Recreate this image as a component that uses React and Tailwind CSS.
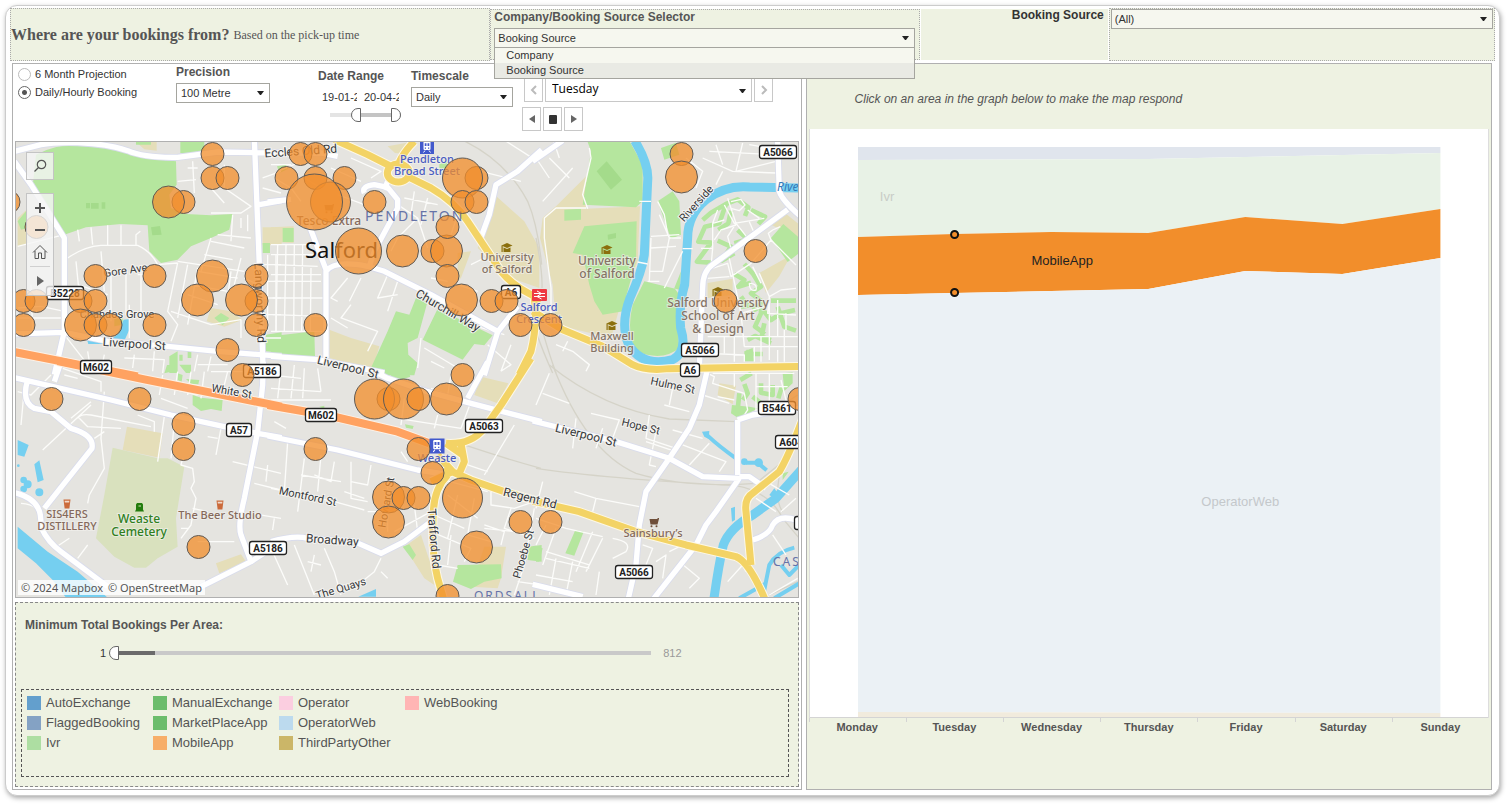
import React from "react";

const TILES = {
  A: "translate(10 138) scale(.3333)",
  B: "translate(270 138) scale(.3333)",
  C: "translate(535 138) scale(.3333)",
  D: "translate(10 365) scale(.3333)",
  E: "translate(270 365) scale(.3333)",
  F: "translate(535 365) scale(.3333)",
  G: "translate(680 180) scale(.3333)",
};

const BEIGE = {
  A: "M375 12H437V38L400 34ZM20 240L50 212V318L20 326ZM755 268H812V320H755ZM587 550L600 510L660 520L695 545L640 566Z",
  B: "M0 268L68 265V315L0 312ZM175 575L240 600L325 625L305 695L175 660ZM665 165L760 250L805 330V450L720 420L620 330L650 250ZM560 345L600 340L570 420L560 430ZM350 25L420 12L402 48L372 45Z",
  C: "M155 110L60 205L20 240L12 300L50 440L60 560L225 600L262 470L305 370L312 205L150 212ZM735 215L790 260V300L705 260ZM670 405L765 352L730 415L690 465ZM515 435L590 422V470L515 480Z",
  D: "M348 185L455 205L445 278L335 255ZM615 595L690 568L705 590L625 625Z",
  E: "M400 545L450 510L480 600L490 660L460 640ZM610 90L630 35L712 55L680 115ZM640 545L705 545L690 640L680 670L600 665Z",
  F: "M550 55L600 62L590 118L545 90Z",
};
const GREEN = {
  A: "M75 50Q130 20 210 18Q310 22 350 40Q400 62 495 70L497 140L475 170L480 210L525 228L600 232L665 228L655 275L600 300L540 325L500 365L450 375L415 340L410 262L330 258L225 268L160 290L120 230L65 145ZM508 12H580V45H508ZM20 250L45 220L50 270L30 275ZM755 315H777V345H755ZM610 540L630 525L655 540L635 562ZM765 590L812 583V645L765 640ZM475 655L500 640V705H475ZM505 650H515V668H505ZM530 635H541V660H530ZM505 680H540V705H525ZM310 535L335 540V560L310 565ZM375 12H420V20H375Z",
  B: "M35 270H68V312H35ZM0 595L130 580L132 655L0 650ZM435 480L470 490L440 600L410 615L412 650L440 675L430 712H290L350 580L375 520L415 530ZM455 605L500 512L665 592L640 622L610 618L575 665ZM505 78L530 70L528 95H505ZM18 85L45 80L52 92L25 105Z",
  C: "M155 12H282L320 80V190L300 208L140 200L165 40ZM145 265L302 250L300 370L272 470L262 520L200 530L175 490L160 440L140 350L110 345ZM85 215L135 212V245L85 248ZM325 430L430 455L420 520L430 630Q380 672 300 640Q270 580 290 500ZM365 190L410 160L430 190L435 290L405 302ZM705 300L742 258L790 300V345L755 372ZM375 30L420 14L430 50L385 65ZM435 400L415 450L430 470ZM625 640L650 630L655 670H625Z",
  D: "M545 90L570 98L635 105L632 138L600 132L570 138L545 120ZM468 0H490V18L460 25ZM500 25L515 30L512 50L500 45ZM525 42L565 45L562 58L540 56Z",
  E: "M320 0H405L418 35L380 48ZM402 178L428 183L425 192L405 188ZM395 545L415 538L435 570L425 585ZM560 600L690 598L692 640L640 650L600 672L546 650ZM770 545L812 540V590L770 585ZM145 125L160 122V132Z",
  F: "M0 545L20 550L10 590H0ZM118 495L143 500L115 572L88 565ZM740 25L770 22V55L745 78ZM588 120L640 125L665 130L640 145L605 158L585 145ZM740 325L758 320L740 345Z",
};
const DARK_GREEN = {
  A: "M225 195H237V211H225ZM240 195H263V212H240ZM272 193H283V212H272ZM420 268L447 264L452 290L424 292Z",
  C: "M182 100L212 70L258 125L225 155ZM215 290L240 285V300L216 305Z",
};
const ESTATE = {
  G: "M65 120L90 98L135 72L115 130L72 140L52 185L90 188L48 245L90 248M135 72L170 58L202 82L192 108M150 92L142 130L112 150M170 150L200 178L160 190M110 182L150 200L122 242L160 220M210 90L252 110L232 132M160 282L190 300L172 320L210 308M190 252L215 280L240 320L210 340L240 362V400L222 440L252 462M230 370L270 420L300 400L342 390M290 380L310 440L345 452M270 362H345M200 480L222 468L270 490M195 515L215 522H245M200 540L208 525M180 380L215 375L225 395M250 430L242 470L270 480M180 350L200 380M178 600L212 580M190 612L200 640L186 660M240 610V638L275 645V615M302 622L292 655M175 640L170 690L210 690M215 650L240 670",
};
const WATER_FILL = {
  A: "M228 605L290 612L318 590L338 545L357 543L355 575L340 608L300 606L280 618L232 618Z",
  D: "M20 485L110 560L200 620L290 698H165L125 645L75 595L20 550ZM20 225L53 240L40 275L20 270ZM70 298L85 286L98 345L80 352ZM73 382a12 12 0 1 0 24 0a12 12 0 1 0-24 0M28 345a10 10 0 1 0 20 0a10 10 0 1 0-20 0M38 358a12 12 0 1 0 24 0a12 12 0 1 0-24 0M28 372a10 10 0 1 0 20 0a10 10 0 1 0-20 0M18 302a4 4 0 1 0 8 0a4 4 0 1 0-8 0",
  E: "M262 695L315 672V695Z",
  F: "M498 200L520 198L518 222L505 215ZM615 290a10 10 0 1 0 20 0a10 10 0 1 0-20 0M655 293a13 13 0 1 0 26 0a13 13 0 1 0-26 0M700 390L715 370L725 385L715 400ZM585 430L597 425V465L588 470Z",
};
const RIVER = {
  C: "M296 8Q340 80 335 130L325 350Q318 400 282 480Q252 560 278 620Q320 690 410 665Q456 640 434 570Q428 500 446 440L455 300Q455 230 510 185Q570 140 640 147L800 150",
  F: "M534 700Q548 600 562 540Q580 490 650 450L720 400L800 310",
};
const STREAM = {
  F: "M515 212Q550 245 600 280M630 293H665L692 316M682 690L700 600Q722 560 775 548M610 700L690 655M715 700L790 655M735 600L760 630L790 600",
};
const RAIL = {
  B: "M560 0Q700 60 770 190Q800 260 812 380",
  C: "M0 300Q20 400 18 450M0 580Q20 640 50 705M20 580Q40 650 60 705",
  E: "M580 240Q700 280 810 310",
  F: "M40 0Q200 130 400 162L600 170Q700 150 785 90M50 0Q150 260 300 325Q450 370 660 355L740 290M0 310Q200 340 600 362Q700 380 740 460L790 520M740 290Q710 400 740 440M700 690L785 650",
};
const MINOR = {
  A: "M500 130L555 125M545 70L550 165M640 80V150L720 205L690 225H600M600 150L640 195M530 90H560M755 120L810 100M755 150L810 165M20 325L160 290M170 360Q220 325 270 322H380Q420 340 440 380L500 375M200 275L205 310M240 268L245 320M290 262V320M330 262V322M375 322V290L388 280M195 370L205 470M270 340L280 460M300 400V550M345 400V530M390 390V545M200 440L290 470M380 410H400M500 375L470 520L500 560L480 610M530 380L500 540M560 390L530 560M600 300L570 400M580 350L665 365M560 400L680 420M540 440L650 460M500 370L700 400M600 310L700 330M620 290L720 300M480 520L600 560L690 545L690 600M660 400L650 480M690 360L670 440M530 470L620 500M700 420L740 440M355 500V600M160 590L230 680M20 510L90 505L160 520M60 440L65 580M20 540H150M230 640L240 700M280 650L270 700M340 660L460 665L455 705M370 650L365 690M430 640L425 700M560 650L550 700M600 655L590 700M560 680H650M740 600H810M770 350V580M795 350V580M750 380H810M750 430H810M750 480H810M750 530H810M665 230L660 310M690 240V270M710 230V280",
  B: "M0 320H120M0 350H130M10 380L140 385M10 430H150M5 480H160M5 530L160 535M20 320L15 580M45 320L40 580M70 320L68 580M95 320L92 580M120 390L118 580M0 580H160M10 120L60 150L90 190M20 100L80 75M0 80H60M100 120L150 150M240 60L330 100L300 120M180 90L270 130M200 170L280 200M380 200L440 240L470 330M400 180L500 200M430 160L420 230M440 240L380 300L360 340M470 180L450 260M530 430L480 420M560 440L620 460M600 380L640 360M350 410L320 480L380 470M380 430L350 520M230 420L180 480L200 490M270 420L235 490M240 500L210 540L320 580L290 640M180 540L230 570M600 560L700 590M560 230L540 290M180 680L330 700M650 620L720 680L690 700M720 620L690 700M450 600L440 690M460 630L560 690M630 100L750 130M690 0L800 70M480 670L520 690M0 410H150",
  C: "M50 0L70 60M0 60L40 120M20 190L110 90M40 60L100 120M150 210H60L25 240V300L45 450V550M160 30L165 60L140 170L155 212M310 190H345M305 372L335 378M345 295L430 290M345 330L420 325M370 230L400 300L380 400H340M365 190L385 230L395 290M345 300L340 430M400 300L435 300M335 430H370M440 340L385 450M440 332H470M450 60L500 100L480 150M500 60L590 100L720 105M540 20L560 80M620 15L600 100L720 70M520 40L720 50M560 100L540 140M640 20L700 30M60 620L110 640L160 680L150 700M95 610L80 640",
  G: "M60 205H95L90 260M95 205V130L130 120M95 130L110 90M130 75L160 130L250 115M140 55L165 130L140 170L150 205L130 235M165 130L205 180M165 135L120 150L100 180M150 65L180 58L192 75L175 92L150 85M200 90L235 115M205 125L220 160M80 270L140 250L150 290L210 250L270 180L262 160L275 150L298 140M270 180L345 255M145 235L180 400L190 500M80 295L145 290M235 280L265 350L260 400L345 405M265 350L300 330L345 325M215 260L240 310M205 310Q230 310 225 330Q205 335 205 310M265 350V540M290 360V470M315 400V450M80 470H350M190 500H350M80 520L190 525V545M160 470V545M220 500V545M310 450V545M240 470V545M290 510V545M130 470V520M180 400L250 380M80 580L100 590L95 610L190 640M95 580H340M160 580V620M225 580V700M265 580V700M300 600L320 680M225 620H320M190 640L200 690L180 720M110 650L160 660",
  D: "M20 80L60 90L120 30M40 70L30 180M155 10L270 50V80M160 30L200 40M240 120L95 255M180 160L240 110M280 80L270 220L280 310L235 390L230 415M200 160Q210 145 240 150L420 185M205 160L230 185L330 190M250 220L280 200M380 150L430 170V200M455 30L445 90M460 155L440 290M490 170L480 280M515 280L510 300L545 310L550 350L540 370L555 400L540 480L510 520M545 430L590 440M560 530H670M510 490H535M500 20L490 90M540 20L530 90M580 20L570 100M440 60L560 90M450 100L530 130M630 190L615 270M590 215L620 220M665 290L810 325M770 300L765 350M730 355L810 375M790 460L785 495M720 445L810 460M600 20H700M650 20L640 60M230 540L200 580M30 415Q90 420 85 460M130 550L175 520",
  E: "M0 30L90 40M30 10L20 100M70 0L60 100M0 70L150 80M100 10L95 100M140 10L150 80M0 105H180M10 170L45 190M50 230L40 380M0 370L40 378L190 410L280 435M100 280L80 440M150 270L140 380M190 290L180 350L130 330M240 290V400L290 410M220 380L280 400M300 300L290 360L240 350M90 330L210 350M350 340V500M390 260L410 290M370 500L480 440M290 440H340M430 420L440 500M500 340L650 380M530 390L620 460M560 390L530 520M610 400L590 510L660 530M490 450L580 490M480 500L600 550L580 590M640 480L700 500L690 540M540 510L530 600M500 600L560 610M660 380V420L730 430L790 410M720 430L700 490L790 520M790 430L760 600L730 690M0 550L50 660M70 540L130 690M160 550L190 620L210 690M110 590L150 600M130 570L120 620M330 580L310 620L260 660M330 620L350 640M730 180L640 330M480 70L560 100M500 150L490 190M380 160L570 190L600 110M540 30L530 90M400 100L390 180M590 300L650 320M640 490L730 500M740 650L810 660",
  F: "M40 25L0 120M20 85L100 115M165 145L250 165L230 220M120 160L110 250M180 250L200 190M410 70L400 120M385 120L460 140M500 90L580 115M340 150L330 220L420 250M330 230L420 260M360 200L340 300L360 305M410 195L500 220M440 240L570 290L550 320M460 300L520 235M20 350L0 430M115 380L180 400L310 425M180 400L170 440M0 460L60 480L90 490M30 480L0 540M60 490L20 600M90 490L200 515M170 500L120 620M200 520L150 620M230 520Q290 530 270 560L230 580M30 560L160 600M30 580L160 610M60 580L40 690M110 590L90 690M190 620L180 690M0 630L110 650M320 540L350 550L330 600M360 590L390 570L380 640M400 560L440 540M430 590L490 640L460 670M460 570L430 600M575 650L620 600L630 620M650 530L700 490M710 510L750 570M700 690L785 640M735 440L780 400M690 350L760 390M660 400L720 440",
};
const MAIN = {
  A: "M10 40L90 20Q130 12 200 14Q290 18 350 38Q400 60 500 58Q560 50 620 42L812 45M730 0L745 380L757 710M10 70L60 140L160 300V580L130 710M10 588L160 583L290 610L470 625L620 640L812 655M745 200L812 188",
  B: "M0 45H150L200 55M-10 192L60 184M110 250L165 395V660M165 400Q190 365 290 385L340 400L480 470L680 580M280 165Q270 145 310 140L350 148L380 185V210L310 340L295 385M340 155L350 130M812 35L740 100L675 140L655 230L625 312M740 505L680 582L640 712M0 655L140 665L340 705",
  C: "M725 8L730 160Q740 190 800 240M755 215L530 380Q500 400 500 450L490 690M-10 70L80 8",
  D: "M10 38L300 105L480 150L640 185L740 205L812 218M50 45Q30 110 70 130L120 140L180 190Q250 210 243 250L100 430M10 383Q80 400 88 450L92 490Q110 530 150 560L290 665M560 670L720 590L812 530M130 50L150 -10M757 -10L755 60L740 200L700 400Q680 480 690 510L720 590",
  E: "M-10 213L200 255L440 315L540 330M310 20L350 40L470 80L600 115L812 170M0 530Q70 510 110 520L250 530L330 565L400 530L480 470M650 -10L590 100",
  F: "M-10 168L240 230L400 280L500 335L610 340M515 10L490 120L460 190L400 280L330 380L310 480L300 600L275 710M605 165L650 150L790 130M605 165V330M610 340L540 440L510 480L480 540L350 705M610 335H640L690 370M650 525Q700 510 710 480Q730 445 790 468M-10 658L140 695",
};
const YELLOW = {
  B: "M190 5L290 50L360 85M385 72Q400 40 430 10M415 118L480 150Q550 190 590 250L690 400Q730 450 812 485M790 480Q800 560 780 640L745 710M349 105a33 27 0 1 0 66 0a33 27 0 1 0-66 0",
  C: "M-10 520L80 575L200 625L290 680Q330 700 400 692L800 685",
  E: "M780 -20L690 120L640 190Q600 240 525 235M570 235L580 290L565 325M500 270L545 320L480 350M520 310L600 345L700 380L812 412M530 330Q490 370 487 440Q480 560 500 640L520 710M525 235L575 270",
  F: "M-10 408L130 440L300 500L450 540L600 575Q640 590 690 710M800 160Q760 270 730 320L650 385Q625 400 630 440L645 600",
};
const MOTORWAY = {
  A: "M0 640L380 715",
  D: "M140 -12L400 43L600 83L812 125",
  E: "M-10 120L180 153L380 200L475 235",
};

const BUBBLES = [
  [212, 154], [212, 178], [227, 178], [183, 202], [168, 202, 16], [8, 202], [36, 227],
  [95, 276], [154, 276], [212, 276, 16], [197, 300, 16], [256, 276], [256, 301], [241, 300, 16], [256, 325],
  [23, 301], [36, 301], [80, 301], [95, 301], [23, 325], [80, 325, 16], [95, 325], [110, 325],
  [154, 325], [227, 350], [242, 375], [300, 154], [315, 154], [286, 178], [315, 178],
  [344, 178], [330, 202, 20], [314, 202, 28], [374, 202], [358, 251, 23], [402, 251, 16], [432, 251],
  [446, 251, 16], [476, 178], [462, 178, 20], [462, 202], [476, 202], [447, 227], [447, 276],
  [461, 300, 16], [491, 301], [506, 301], [520, 325], [315, 325], [462, 375], [681, 154],
  [681, 177, 16], [755, 251], [725, 301], [550, 325], [51, 399], [139, 399], [183, 424],
  [183, 449], [198, 547], [388, 399], [374, 399, 20], [403, 399, 20], [418, 399], [446, 399, 16],
  [315, 449], [418, 449], [432, 473], [388, 497, 16], [403, 498], [418, 498], [388, 522, 16],
  [462, 498, 20], [476, 547, 16], [520, 522], [447, 596], [550, 522], [799, 399],
];

const SHIELDS = [
  ["B5228", 64, 293, 37], ["M602", 95, 367, 31], ["A5186", 261, 371, 37], ["M602", 320, 415, 31],
  ["A57", 238, 430, 25], ["A5186", 267, 548, 37], ["A6", 510, 292, 19], ["A5063", 483, 426, 37],
  ["A5066", 777, 152, 37], ["A5066", 699, 350, 37], ["A6", 689, 370, 19], ["B5461", 776, 408, 37],
  ["A6042", 793, 442, 37], ["A5066", 633, 572, 37], ["", 800, 523, 13],
];

const ROAD_LABELS = [
  ["Eccles Old Rd", 300, 155, -4, 12], ["Gore Ave", 125, 274, -8, 11], ["Chandos Grove", 116, 318, 0, 11],
  ["Liverpool St", 133, 348, 4, 12], ["White St", 230, 395, 10, 11], ["Langworthy Rd", 255, 303, 88, 12],
  ["Liverpool St", 346, 371, 14, 12], ["Churchill Way", 445, 314, 30, 12], ["Riverside", 698, 206, -48, 11],
  ["Hulme St", 671, 389, 12, 11], ["Hope St", 639, 430, 14, 11], ["Liverpool St", 584, 439, 14, 12],
  ["Montford St", 306, 500, 12, 11], ["Howard St", 389, 503, -80, 11], ["Broadway", 331, 544, 4, 12],
  ["The Quays", 341, 592, -17, 11], ["Trafford Rd", 429, 539, 85, 12], ["Phoebe St", 526, 555, -74, 11],
  ["Regent Rd", 528, 502, 14, 12],
];

function Layer({ data, ...rest }) {
  return Object.entries(data).map(([tile, d]) => (
    <g key={tile} transform={TILES[tile]}>
      <path d={d} {...rest} />
    </g>
  ));
}

function Roads({ data, color, width, casing, casingWidth }) {
  return (
    <g fill="none" strokeLinejoin="round">
      {casing && <Layer data={data} stroke={casing} strokeWidth={casingWidth} />}
      <Layer data={data} stroke={color} strokeWidth={width} />
    </g>
  );
}

function Poi({ lines, x, y, color, size = 11, gap = 12 }) {
  return (
    <text textAnchor="middle" fill={color} stroke="#f1f0ed" strokeWidth="2" strokeOpacity=".7" paintOrder="stroke" fontSize={size} fontFamily="'Noto Sans', 'Open Sans', sans-serif" fontWeight="500">
      {lines.map((l, i) => (
        <tspan key={l} x={x} y={y + i * gap}>{l}</tspan>
      ))}
    </text>
  );
}

function Cap({ x, y }) {
  return (
    <g transform={`translate(${x} ${y})`} fill="#8b6f0d">
      <path d="M-5.500 -2.500L0 -5L5.500 -2.500L0 0Z" />
      <path d="M-3.500 -.6L0 1L3.500 -.6V4H-3.500Z" />
      <path d="M-5.500 -2.500h1.200V4h-1.200Z" />
    </g>
  );
}

function Station({ x, y, s = 14 }) {
  return (
    <g transform={`translate(${x} ${y}) scale(${s / 14})`}>
      <rect x="-7" y="-7" width="14" height="14" fill="#4259cc" />
      <rect x="-3.500" y="-5.500" width="7" height="8.500" rx="1" fill="#fff" />
      <path d="M-2.300 -3.800H-.5V-1H-2.300ZM.5 -3.800H2.300V-1H.5ZM-2.200 .6h1.200v1.200h-1.200ZM1 .6h1.200v1.200H1Z" fill="#4259cc" />
      <path d="M-2 3.500L-3.500 5.500M2 3.500L3.500 5.500" stroke="#fff" />
    </g>
  );
}

function Glass({ x, y }) {
  return (
    <g transform={`translate(${x} ${y})`}>
      <path d="M-3.500 -4.500H3.500L2.400 4.500H-2.400Z" fill="#cb6a3a" />
      <path d="M-2.400 -3.300H2.400L2.200 -1.500H-2.200Z" fill="#f2d9c9" />
    </g>
  );
}

function Cart({ x, y }) {
  return (
    <g transform={`translate(${x} ${y})`} fill="#6f4f3a">
      <path d="M-4.500 -4H3L4 -5H5V-4.300L3.500 1.500H-3.500Z" />
      <circle cx="-2.500" cy="3.200" r="1" />
      <circle cx="2.500" cy="3.200" r="1" />
    </g>
  );
}

function MapDrawing() {
  return (
    <svg viewBox="15 142 782 455" preserveAspectRatio="xMinYMin slice" className="block h-[455px] w-full" role="img" aria-label="Map of bookings by area">
      <rect x="-400" y="-400" width="1800" height="1600" fill="#e5e4e0" />
      <Layer data={BEIGE} fill="#e5deb9" />
      <g transform={TILES.D}>
        <path d="M305 248L440 280L470 280L520 305L495 460L500 545L440 580L405 608H370L310 575L255 520L280 390Z" fill="#d9e1be" />
      </g>
      <Layer data={GREEN} fill="#b5e69e" />
      <Layer data={DARK_GREEN} fill="#a4db8b" />
      <Roads data={ESTATE} color="#b5e69e" width="14" />
      <Layer data={WATER_FILL} fill="#75cff0" />
      <Roads data={RAIL} color="#d5d3c8" width="4" />
      <Roads data={STREAM} color="#75cff0" width="12" />
      <Roads data={RIVER} color="#75cff0" width="27" />
      <Roads data={MINOR} color="#fcfcfa" width="4" />
      <Roads data={MAIN} color="#ffffff" width="16" casing="#d9dcec" casingWidth="21" />
      <Roads data={MOTORWAY} color="#ffa261" width="24" casing="#fdf1e6" casingWidth="30" />
      <Roads data={YELLOW} color="#f3d365" width="21" casing="#fdf8e6" casingWidth="27" />

      <g fill="#36383b" stroke="#f4f3f0" strokeWidth="2" paintOrder="stroke" textAnchor="middle" fontFamily="Roboto, 'Liberation Sans', sans-serif">
        {ROAD_LABELS.map(([t, x, y, a, size]) => (
          <text key={t + x} fontSize={size} transform={`translate(${x} ${y}) rotate(${a})`}>{t}</text>
        ))}
      </g>

      <g textAnchor="middle" fontFamily="Roboto, 'Liberation Sans', sans-serif">
        {SHIELDS.map(([t, x, y, w]) => (
          <g key={t + x}>
            <rect x={x - w / 2} y={y - 6.5} width={w} height="13" rx="2.500" fill="#fff" stroke="#222" strokeWidth="1.300" />
            <text x={x} y={y + 4} fontSize="10" fontWeight="700" fill="#222">{t}</text>
          </g>
        ))}
      </g>

      <g fill="#6673a8" fontFamily="'Noto Sans', sans-serif" letterSpacing="2">
        <text x="364" y="221" fontSize="14">PENDLETON</text>
        <text x="473" y="600" fontSize="12">ORDSALL</text>
        <text x="772" y="566" fontSize="12">CASTLEFIELD</text>
      </g>
      <text x="304" y="258" fontSize="22" fill="#111" fontFamily="'Noto Sans', sans-serif">Salford</text>
      <text x="776" y="191" fontSize="12" fontStyle="italic" fill="#3579b8" fontFamily="'Noto Sans', sans-serif">River Irwell</text>

      <Poi lines={["Pendleton", "Broad Street"]} x={426} y={163} color="#4b5cc0" />
      <Poi lines={["Tesco Extra"]} x={328} y={225} color="#85695b" size={12} />
      <Poi lines={["University", "of Salford"]} x={506} y={261} color="#857365" />
      <Poi lines={["University", "of Salford"]} x={606} y={265} color="#857365" size={12} gap={13} />
      <Poi lines={["Salford University", "School of Art", "& Design"]} x={717} y={307} color="#857365" size={12} gap={13} />
      <Poi lines={["Maxwell", "Building"]} x={611} y={340} color="#857365" />
      <Poi lines={["Salford", "Crescent"]} x={538} y={311} color="#4b5cc0" />
      <Poi lines={["Weaste"]} x={436} y={462} color="#4b5cc0" />
      <Poi lines={["SIS4ERS", "DISTILLERY"]} x={66} y={518} color="#85695b" />
      <Poi lines={["The Beer Studio"]} x={219} y={519} color="#85695b" />
      <Poi lines={["Weaste", "Cemetery"]} x={138} y={523} color="#2f7f1d" size={12} gap={13} />
      <Poi lines={["Sainsbury’s"]} x={652} y={537} color="#85695b" />

      <Cap x={506} y={248} />
      <Cap x={606} y={250} />
      <Cap x={717} y={292} />
      <Cap x={611} y={326} />
      <Station x={426} y={147} />
      <Station x={436} y={446} s={15} />
      <g transform="translate(538 295)">
        <rect x="-7" y="-6" width="15" height="12" rx="1" fill="#ee3a43" />
        <path d="M-5 -1.500H6M-5 1.500H6M-2 -4L2.500 -1.500L-2 1.500L2.500 4" fill="none" stroke="#fff" />
      </g>
      <Glass x={66} y={504} />
      <Glass x={219} y={505} />
      <Cart x={653} y={523} />
      <Cart x={328} y={209} />
      <path d="M136 503h5l1 1.500v5l1 2h-9l1-2v-5Z" fill="#237c0d" />
      <path d="M137.500 506h2.500" stroke="#d9e1be" />

      <g fill="#f28e2b" fillOpacity=".76" stroke="#5f5a55" strokeWidth="1">
        {BUBBLES.map(([x, y, r], i) => (
          <circle key={i} cx={x - 0.5} cy={y} r={r || 11.5} />
        ))}
      </g>
    </svg>
  );
}

const FIELD = "block appearance-none rounded-none border border-[#a5a59f] text-[11px] leading-[14px] text-[#333] outline-none";

function Arrow({ className }) {
  return (
    <svg viewBox="0 0 7 4" className={`pointer-events-none absolute h-[4px] w-[7px] ${className}`} fill="#222" aria-hidden="true">
      <path d="M0 0H7L4 4H3Z" />
    </svg>
  );
}

function SmallSelect({ id, label, value, width }) {
  return (
    <div>
      <label htmlFor={id} className="block text-[12px] leading-[14px] font-bold text-[#555]">{label}</label>
      <div className={`relative mt-1 ${width}`}>
        <select id={id} className={`${FIELD} h-[20px] w-full bg-white pl-[4px]`}>
          <option>{value}</option>
        </select>
        <Arrow className="top-[8px] right-[6px]" />
      </div>
    </div>
  );
}

function RadioRow({ text, checked }) {
  return (
    <label className="flex h-[18px] items-center gap-[4px] text-[11px] text-[#333]">
      <input
        type="radio"
        name="mode"
        defaultChecked={checked}
        className="h-[13px] w-[13px] appearance-none rounded-full border border-[#bbb] bg-white checked:border-[#666] checked:bg-[radial-gradient(circle,#555_0_2px,transparent_3px)]"
      />
      {text}
    </label>
  );
}

const NAV = "flex h-[24px] w-[19px] items-center justify-center border border-[#c8c8c8] bg-white";

function Toolbar() {
  return (
    <div className="flex h-[77px]">
      <div className="w-[161px] shrink-0 pt-[1px] pl-[3px]">
        <RadioRow text="6 Month Projection" />
        <RadioRow text="Daily/Hourly Booking" checked />
      </div>
      <div className="w-[142px] shrink-0 pt-[1px]">
        <SmallSelect id="precision" label="Precision" value="100 Metre" width="w-[94px]" />
      </div>
      <div className="w-[93px] shrink-0 pt-[5px]">
        <div className="text-[12px] leading-[14px] font-bold text-[#555]">Date Range</div>
        <div className="mt-[7px] flex gap-[7px] pl-[4px]">
          <input aria-label="Start date" defaultValue="19-01-2024" className="block h-[14px] w-[35px] bg-transparent p-0 text-[11px] text-[#333]" />
          <input aria-label="End date" defaultValue="20-04-2024" className="block h-[14px] w-[35px] bg-transparent p-0 text-[11px] text-[#333]" />
        </div>
        <div className="relative mt-[4px] ml-[12px] h-[14px] w-[71px] bg-[linear-gradient(to_right,#e4e4e4_0_26px,#c4c4c4_26px)] bg-[length:100%_4px] bg-center bg-no-repeat">
          <input
            type="range"
            aria-label="Range start"
            defaultValue="34"
            className="pointer-events-none absolute inset-0 h-[14px] w-full appearance-none bg-transparent [&::-webkit-slider-thumb]:pointer-events-auto [&::-webkit-slider-thumb]:h-[14px] [&::-webkit-slider-thumb]:w-[10px] [&::-webkit-slider-thumb]:appearance-none [&::-webkit-slider-thumb]:rounded-l-full [&::-webkit-slider-thumb]:border [&::-webkit-slider-thumb]:border-[#666] [&::-webkit-slider-thumb]:bg-white"
          />
          <input
            type="range"
            aria-label="Range end"
            defaultValue="100"
            className="pointer-events-none absolute inset-0 h-[14px] w-full appearance-none bg-transparent [&::-webkit-slider-thumb]:pointer-events-auto [&::-webkit-slider-thumb]:h-[14px] [&::-webkit-slider-thumb]:w-[10px] [&::-webkit-slider-thumb]:appearance-none [&::-webkit-slider-thumb]:rounded-r-full [&::-webkit-slider-thumb]:border [&::-webkit-slider-thumb]:border-[#666] [&::-webkit-slider-thumb]:bg-white"
          />
        </div>
      </div>
      <div className="w-[111px] shrink-0 pt-[5px]">
        <SmallSelect id="timescale" label="Timescale" value="Daily" width="w-[102px]" />
      </div>
      <div className="pt-[14px]">
        <div className="flex gap-[2px] pl-[2px]">
          <button aria-label="Previous day" className={NAV}>
            <svg viewBox="0 0 8 10" className="h-[10px] w-[8px]" fill="none" stroke="#bbb" strokeWidth="2"><path d="M6 1L2 5L6 9" /></svg>
          </button>
          <div className="relative w-[207px]">
            <select aria-label="Day" className="block h-[24px] w-full appearance-none border border-[#c8c8c8] bg-white pb-[2px] pl-[6px] font-['Open_Sans',sans-serif] text-[12px] text-black">
              <option>Tuesday</option>
            </select>
            <Arrow className="top-[11px] right-[6px]" />
          </div>
          <button aria-label="Next day" className={NAV}>
            <svg viewBox="0 0 8 10" className="h-[10px] w-[8px]" fill="none" stroke="#bbb" strokeWidth="2"><path d="M2 1L6 5L2 9" /></svg>
          </button>
        </div>
        <div className="mt-[5px] flex gap-[2px]">
          <button aria-label="Play backwards" className={NAV}>
            <svg viewBox="0 0 6 8" className="h-[8px] w-[6px]" fill="#666"><path d="M6 0V8L0 4Z" /></svg>
          </button>
          <button aria-label="Stop" className={NAV}>
            <span className="h-[9px] w-[8px] rounded-[1px] bg-[#333]" />
          </button>
          <button aria-label="Play forwards" className={NAV}>
            <svg viewBox="0 0 6 8" className="h-[8px] w-[6px]" fill="#666"><path d="M0 0V8L6 4Z" /></svg>
          </button>
        </div>
      </div>
    </div>
  );
}

const CONTROL = "flex w-full items-center justify-center";

function MapPanel() {
  return (
    <div className="relative overflow-hidden border border-[#b0b0b0]">
      <MapDrawing />
      <div className="absolute top-[10px] left-[10px] h-[28px] w-[28px] border border-[#c4c4c4] bg-[#f5f5f5]/80">
        <button aria-label="Search" className={`${CONTROL} h-full`}>
          <svg viewBox="0 0 14 14" className="h-[14px] w-[14px]" fill="none" stroke="#555" strokeWidth="1.200"><circle cx="8.500" cy="5.500" r="4.200" /><path d="M5.500 8.500L1.500 12.500" /></svg>
        </button>
      </div>
      <div className="absolute top-[51px] left-[10px] flex h-[103px] w-[28px] flex-col border border-[#c4c4c4] bg-[#f5f5f5]/80">
        <button aria-label="Zoom in" className={`${CONTROL} h-[28px]`}>
          <svg viewBox="0 0 10 10" className="h-[10px] w-[10px]" stroke="#555" strokeWidth="2"><path d="M5 0V10M0 5H10" /></svg>
        </button>
        <button aria-label="Zoom out" className={`${CONTROL} h-[16px]`}>
          <svg viewBox="0 0 10 10" className="h-[10px] w-[10px]" stroke="#555" strokeWidth="2"><path d="M0 5H10" /></svg>
        </button>
        <button aria-label="Reset view" className={`${CONTROL} h-[28px]`}>
          <svg viewBox="0 0 16 16" className="h-[16px] w-[16px]" fill="none" stroke="#555"><path d="M1 8.500L8 1.500L15 8.500M3 7V14.500H6.500V9H9.500V14.500H13V7" /></svg>
        </button>
        <span className="mx-[3px] border-t border-[#d0d0d0]" />
        <button aria-label="Map tools" className={`${CONTROL} grow`}>
          <svg viewBox="0 0 7 10" className="h-[10px] w-[7px]" fill="#666"><path d="M0 0L7 5L0 10Z" /></svg>
        </button>
      </div>
      <div className="absolute bottom-[2px] left-[2px] flex gap-[5px] bg-white/80 px-[3px] font-['Noto_Sans',sans-serif] text-[11px] leading-[15px] text-[#555]">
        <span>© 2024 Mapbox</span>
        <span>© OpenStreetMap</span>
      </div>
    </div>
  );
}

const LEGEND = [
  ["AutoExchange", "bg-[#639fcd]"],
  ["FlaggedBooking", "bg-[#84a2c4]"],
  ["Ivr", "bg-[#addea2]"],
  ["ManualExchange", "bg-[#6cbd6c]"],
  ["MarketPlaceApp", "bg-[#6cbd6c]"],
  ["MobileApp", "bg-[#f7ae68]"],
  ["Operator", "bg-[#fbcee0]"],
  ["OperatorWeb", "bg-[#bcdaee]"],
  ["ThirdPartyOther", "bg-[#cbb668]"],
  ["WebBooking", "bg-[#ffb5b4]"],
];

function FilterPanel() {
  return (
    <div className="mt-[4px] h-[185px] border border-dashed border-[#888] bg-[#eef2e2] pt-[14px] pr-[9px] pl-[5px]">
      <label htmlFor="min-total" className="block pl-[4px] text-[12px] leading-[16px] font-bold text-[#555]">
        Minimum Total Bookings Per Area:
      </label>
      <div className="mt-[13px] flex h-[14px] items-center pr-[107px] pl-[79px]">
        <span className="w-[9px] text-[11px] leading-[14px] text-[#333]">1</span>
        <input
          id="min-total"
          type="range"
          min="1"
          max="812"
          defaultValue="1"
          className="h-[14px] min-w-0 grow appearance-none bg-[linear-gradient(to_right,transparent_0_8px,#6b6b6b_8px_46px,#c9c9c9_46px)] bg-[length:100%_4px] bg-center bg-no-repeat [&::-webkit-slider-thumb]:h-[14px] [&::-webkit-slider-thumb]:w-[10px] [&::-webkit-slider-thumb]:appearance-none [&::-webkit-slider-thumb]:rounded-l-full [&::-webkit-slider-thumb]:border [&::-webkit-slider-thumb]:border-[#666] [&::-webkit-slider-thumb]:bg-white"
        />
        <span className="ml-[12px] text-[11px] leading-[14px] text-[#999]">812</span>
      </div>
      <ul className="mt-[29px] grid h-[88px] grid-flow-col grid-cols-[repeat(4,126px)] grid-rows-[repeat(3,20px)] border border-dashed border-[#555] pt-[3px] pl-[5px]">
        {LEGEND.map(([name, color]) => (
          <li key={name} className="flex items-center gap-[5px] text-[13px] leading-[20px] text-[#555]">
            <span className={`h-[14px] w-[14px] shrink-0 ${color}`} />
            {name}
          </li>
        ))}
      </ul>
    </div>
  );
}

const DAYS = ["Monday", "Tuesday", "Wednesday", "Thursday", "Friday", "Saturday", "Sunday"];

function ChartPanel() {
  return (
    <section className="min-w-0 flex-[686] border border-[#b0b0b0] bg-[#eef2e2] px-[2px]">
      <p className="h-[65px] pt-[27px] pl-[46px] text-[12px] leading-[16px] text-[#555] italic">
        Click on an area in the graph below to make the map respond
      </p>
      <svg viewBox="810 129 678 589" preserveAspectRatio="none" className="block h-[589px] w-full border-x border-[#ddd] bg-white" role="img" aria-label="Share of bookings by source and day">
        <path d="M858 147H1440V153L1245 157L1148 159L858 160Z" fill="#e0e5ed" />
        <path d="M858 160L1148 159L1245 157L1440 153V209L1342 224L1245 217L1148 233L1051 232L954 234L858 237Z" fill="#e8f2e6" />
        <path d="M858 237L954 234L1051 232L1148 233L1245 217L1342 224L1440 209V258L1342 274L1245 271L1148 289L1051 291L954 293L858 295Z" fill="#f28e2b" />
        <path d="M858 295L954 293L1051 291L1148 289L1245 271L1342 274L1440 258V713L858 712Z" fill="#ebf1f5" />
        <path d="M858 712L1440 713V718H858Z" fill="#f1ebdd" />
        <path d="M809 717.500H1489" stroke="#d4d4d4" />
        <g fill="#f28e2b" stroke="#111" strokeWidth="2">
          <circle cx="954.500" cy="234.500" r="3.500" />
          <circle cx="954.500" cy="292.500" r="3.500" />
        </g>
        <g textAnchor="middle" fontSize="13" fontFamily="'Liberation Sans', Arial, sans-serif">
          <text x="887" y="201" fill="#c8cdc7">Ivr</text>
          <text x="1062" y="265" fill="#222">MobileApp</text>
          <text x="1240" y="506" fill="#c4c8cb">OperatorWeb</text>
        </g>
      </svg>
      <ul className="grid grid-cols-7 text-center text-[11px] leading-[19px] font-bold text-[#555]">
        {DAYS.map((d) => (
          <li key={d} className="bg-[linear-gradient(#d4d4d4,#d4d4d4)] bg-[length:1px_4px] bg-left-top bg-no-repeat">{d}</li>
        ))}
      </ul>
    </section>
  );
}

function Header() {
  return (
    <header className="grid h-[53px] grid-cols-[480fr_429fr_189fr_386fr]">
      <div className="flex items-center border border-dotted border-[#aaa] bg-[#eef2e2] font-['Liberation_Serif',serif] text-[#555]">
        <h1 className="text-[16px] font-bold whitespace-nowrap">Where are your bookings from?</h1>
        <span className="ml-[4px] text-[12px] whitespace-nowrap">Based on the pick-up time</span>
      </div>
      <div className="my-px border border-dotted border-[#aaa] bg-[#eef2e2] pr-[4px] pl-[3px]">
        <label htmlFor="selector" className="block text-[12px] leading-[14px] font-bold text-[#555]">Company/Booking Source Selector</label>
        <div className="relative mt-[4px]">
          <select id="selector" className={`${FIELD} h-[20px] w-full bg-[#f6f7ef] pl-[3px]`}>
            <option>Booking Source</option>
            <option>Company</option>
          </select>
          <Arrow className="top-[8px] right-[6px]" />
          <ul role="listbox" aria-label="Selector options" className="absolute inset-x-0 top-[19px] z-10 border border-[#a5a59f] bg-[#f6f7ef] text-[11px] leading-[15px] text-[#333]">
            <li role="option" aria-selected="false" className="pl-[11px]">Company</li>
            <li role="option" aria-selected="true" className="bg-[#e9eae4] pl-[11px]">Booking Source</li>
          </ul>
        </div>
      </div>
      <label htmlFor="source" className="mx-px my-px block bg-[#eef2e2] pr-[4px] text-right text-[12px] leading-[12px] font-bold text-[#333]">
        Booking Source
      </label>
      <div className="border border-dotted border-[#aaa] bg-[#eef2e2] px-[1px]">
        <div className="relative">
          <select id="source" className={`${FIELD} h-[20px] w-full bg-[#f6f7ef] pl-[3px]`}>
            <option>(All)</option>
          </select>
          <Arrow className="top-[8px] right-[6px]" />
        </div>
      </div>
    </header>
  );
}

export default function App() {
  return (
    <div className="bg-white pt-[5px] pr-[9px] pb-[9px] pl-[5px] font-['Liberation_Sans',Arial,sans-serif]">
      <main className="rounded-[12px] border border-[#ccc] bg-white px-[4px] pt-[2px] pb-[5px] shadow-[1px_2px_5px_rgba(0,0,0,0.35)]">
        <Header />
        <div className="mt-[2px] flex gap-[4px] pr-[3px] pl-[2px]">
          <section className="min-w-0 flex-[790] border border-[#b0b0b0] p-[2px] pt-0">
            <Toolbar />
            <MapPanel />
            <FilterPanel />
          </section>
          <ChartPanel />
        </div>
      </main>
    </div>
  );
}
